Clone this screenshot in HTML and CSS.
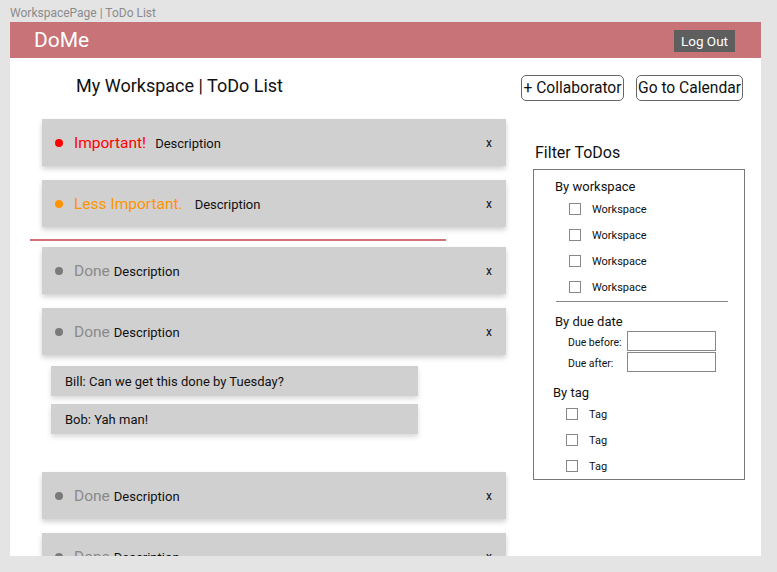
FILE: index.html
```html
<!DOCTYPE html>
<html>
<head>
<meta charset="utf-8">
<link rel="stylesheet" href="styles.css">
</head>
<body>
<div class="frame-label">WorkspacePage | ToDo List</div>
<div class="artboard">
  <header class="topbar">
    <div class="brand">DoMe</div>
    <button class="logout">Log Out</button>
  </header>
  <div class="title-row">
    <h1 class="page-title">My Workspace | ToDo List</h1>
    <div class="actions">
      <button class="outline-btn btn-collab">+ Collaborator</button>
      <button class="outline-btn btn-cal">Go to Calendar</button>
    </div>
  </div>
  <div class="content">
    <div class="list">
      <div class="card">
        <span class="dot dot-red"></span>
        <span class="status status-red">Important!</span>
        <span class="desc desc-wide">Description</span>
        <span class="close">x</span>
      </div>
      <div class="card">
        <span class="dot dot-orange"></span>
        <span class="status status-orange">Less Important.</span>
        <span class="desc desc-wide2">Description</span>
        <span class="close">x</span>
      </div>
      <div class="divider-line"></div>
      <div class="card card-done">
        <span class="dot dot-gray"></span>
        <span class="status status-gray">Done</span>
        <span class="desc">Description</span>
        <span class="close">x</span>
      </div>
      <div class="card card-done card-open">
        <span class="dot dot-gray"></span>
        <span class="status status-gray">Done</span>
        <span class="desc">Description</span>
        <span class="close">x</span>
      </div>
      <div class="comments">
        <div class="comment">Bill: Can we get this done by Tuesday?</div>
        <div class="comment">Bob: Yah man!</div>
      </div>
      <div class="card card-done">
        <span class="dot dot-gray"></span>
        <span class="status status-gray">Done</span>
        <span class="desc">Description</span>
        <span class="close">x</span>
      </div>
      <div class="card card-done">
        <span class="dot dot-gray"></span>
        <span class="status status-gray">Done</span>
        <span class="desc">Description</span>
        <span class="close">x</span>
      </div>
    </div>
    <aside class="filter">
      <h2 class="filter-title">Filter ToDos</h2>
      <div class="filter-box">
        <div class="section-title">By workspace</div>
        <label class="check-row"><span class="box"></span><span>Workspace</span></label>
        <label class="check-row"><span class="box"></span><span>Workspace</span></label>
        <label class="check-row"><span class="box"></span><span>Workspace</span></label>
        <label class="check-row"><span class="box"></span><span>Workspace</span></label>
        <div class="filter-rule"></div>
        <div class="section-title section-due">By due date</div>
        <div class="due-grid">
          <span class="due-label">Due before:</span><span class="due-input"></span>
          <span class="due-label">Due after:</span><span class="due-input"></span>
        </div>
        <div class="section-title section-tag">By tag</div>
        <label class="check-row tag-row"><span class="box"></span><span>Tag</span></label>
        <label class="check-row tag-row"><span class="box"></span><span>Tag</span></label>
        <label class="check-row tag-row"><span class="box"></span><span>Tag</span></label>
      </div>
    </aside>
  </div>
</div>
</body>
</html>
```

FILE: styles.css
```css
* { box-sizing: border-box; }
html, body {
  margin: 0;
  padding: 0;
}
body {
  background: #e4e4e4;
  font-family: Roboto, "Liberation Sans", sans-serif;
  width: 777px;
  height: 572px;
  overflow: hidden;
}
.frame-label {
  height: 22px;
  line-height: 26px;
  padding-left: 10px;
  font-size: 12px;
  color: #8b8b8b;
}
.artboard {
  margin-left: 10px;
  width: 751px;
  height: 534px;
  background: #fff;
  overflow: hidden;
}
.topbar {
  height: 36px;
  background: #c77378;
  display: flex;
  align-items: center;
  justify-content: space-between;
  padding: 0 26px 0 24px;
}
.brand {
  color: #fff;
  font-size: 21px;
  line-height: 24px;
}
.logout {
  width: 61px;
  height: 22px;
  background: #5e5e5e;
  color: #fff;
  border: none;
  font-family: inherit;
  font-size: 13.5px;
  padding: 0;
  margin-top: 1px;
}
.title-row {
  display: flex;
  justify-content: space-between;
  align-items: flex-start;
  padding: 17px 18px 0 66px;
  height: 43px;
}
.page-title {
  margin: 0;
  font-weight: normal;
  font-size: 18px;
  line-height: 22px;
  color: #111;
}
.actions {
  display: flex;
  gap: 12px;
}
.outline-btn {
  height: 26px;
  background: #fff;
  border: 1px solid #666;
  border-radius: 5px;
  font-family: inherit;
  font-size: 15.6px;
  color: #111;
  padding: 0;
  text-align: center;
}
.btn-collab { width: 103px; }
.btn-cal { width: 107px; }
.content {
  display: flex;
  margin-top: 18px;
}
.list {
  margin-left: 32px;
  width: 464px;
}
.card {
  height: 47px;
  background: #d0d0d0;
  box-shadow: 0 3px 5px rgba(0, 0, 0, 0.18);
  display: flex;
  align-items: center;
  padding: 1px 14px 0 13px;
  margin-bottom: 14px;
}
.dot {
  width: 8px;
  height: 8px;
  border-radius: 50%;
  margin-right: 11px;
  flex: none;
}
.dot-red { background: #ff0000; }
.dot-orange { background: #ff9400; }
.dot-gray { background: #7a7a7a; }
.status {
  font-size: 15.5px;
}
.status-red { color: #ff0000; }
.status-orange { color: #ff9400; }
.status-gray { color: #8a8a8a; }
.desc {
  font-size: 13px;
  color: #111;
  margin-left: 4px;
}
.desc-wide { margin-left: 9px; }
.desc-wide2 { margin-left: 12px; }
.close {
  margin-left: auto;
  font-size: 12px;
  color: #111;
}
.divider-line {
  height: 2px;
  width: 416px;
  margin: -2px 0 6px -12px;
  background: #d07278;
}
.card-open { margin-bottom: 11px; }
.comments {
  margin-left: 9px;
  width: 367px;
  margin-bottom: 38px;
}
.comment {
  height: 30px;
  background: #d0d0d0;
  box-shadow: 0 3px 5px rgba(0, 0, 0, 0.15);
  font-size: 13px;
  color: #111;
  display: flex;
  align-items: center;
  padding-left: 14px;
  margin-bottom: 8px;
}
.filter {
  margin-left: 27px;
  width: 212px;
  padding-top: 24px;
}
.filter-title {
  margin: 0 0 6px 2px;
  font-weight: normal;
  font-size: 16px;
  line-height: 20px;
  color: #111;
}
.filter-box {
  border: 1px solid #777;
  height: 311px;
  padding-top: 9px;
}
.section-title {
  font-size: 13px;
  line-height: 16px;
  margin-left: 21px;
  color: #111;
}
.check-row {
  display: flex;
  align-items: center;
  height: 26px;
  padding-left: 35px;
  font-size: 11px;
  color: #111;
}
.check-row:first-of-type { margin-top: 1px; }
.box {
  width: 12px;
  height: 12px;
  border: 1px solid #888;
  background: #fff;
  margin-right: 11px;
  flex: none;
}
.filter-rule {
  height: 1px;
  width: 172px;
  margin: 1px 0 0 22px;
  background: #888;
}
.section-due { margin-top: 12px; }
.due-grid {
  display: grid;
  grid-template-columns: 59px 89px;
  row-gap: 1px;
  margin-left: 34px;
  margin-top: 1px;
}
.due-label {
  font-size: 10.5px;
  height: 20px;
  line-height: 23px;
  color: #111;
}
.due-input {
  height: 20px;
  border: 1px solid #888;
  background: #fff;
}
.section-tag {
  margin-top: 13px;
  margin-left: 19px;
}
.tag-row {
  padding-left: 32px;
}
.tag-row:first-of-type { margin-top: 2px; }
```
